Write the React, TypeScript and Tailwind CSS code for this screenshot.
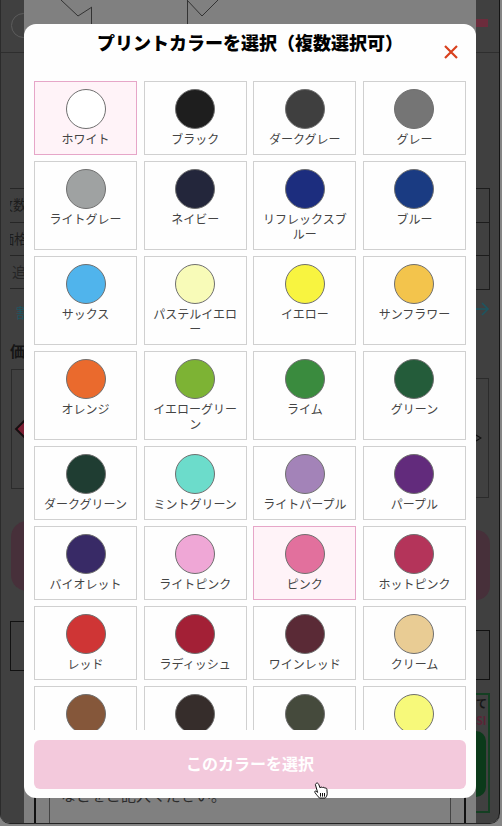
const FONT = "font-['Noto_Sans_CJK_JP','Noto_Sans',sans-serif]";

type Swatch = { name: string; color: string; selected?: boolean };

const swatches: Swatch[] = [
  { name: "ホワイト", color: "#ffffff", selected: true },
  { name: "ブラック", color: "#1e1e1e" },
  { name: "ダークグレー", color: "#3f3f3f" },
  { name: "グレー", color: "#757575" },
  { name: "ライトグレー", color: "#9fa2a2" },
  { name: "ネイビー", color: "#23263b" },
  { name: "リフレックスブルー", color: "#1c2d7e" },
  { name: "ブルー", color: "#1a3b82" },
  { name: "サックス", color: "#50b4ec" },
  { name: "パステルイエロー", color: "#f8fbb8" },
  { name: "イエロー", color: "#f8f440" },
  { name: "サンフラワー", color: "#f3c44c" },
  { name: "オレンジ", color: "#ea6a2d" },
  { name: "イエローグリーン", color: "#7db334" },
  { name: "ライム", color: "#3a8b3e" },
  { name: "グリーン", color: "#245c3a" },
  { name: "ダークグリーン", color: "#1f3d32" },
  { name: "ミントグリーン", color: "#6cdccb" },
  { name: "ライトパープル", color: "#a383b8" },
  { name: "パープル", color: "#622b7c" },
  { name: "バイオレット", color: "#382a66" },
  { name: "ライトピンク", color: "#efa7d6" },
  { name: "ピンク", color: "#e2709d", selected: true },
  { name: "ホットピンク", color: "#b4345a" },
  { name: "レッド", color: "#cf3535" },
  { name: "ラディッシュ", color: "#a32036" },
  { name: "ワインレッド", color: "#5a2a36" },
  { name: "クリーム", color: "#e9cc94" },
  { name: "ブラウン", color: "#85573a" },
  { name: "チョコレート", color: "#362d2b" },
  { name: "オリーブ", color: "#454a3c" },
  { name: "レモン", color: "#f7f97a" },
];

function ColorCell({ swatch }: { swatch: Swatch }) {
  return (
    <button
      className={
        "flex flex-col items-center border px-2 pt-[7px] pb-[8px] " +
        (swatch.selected ? "border-[#e6a6c8] bg-[#fff3f8]" : "border-[#d0d0d0] bg-[#fefefe]")
      }
    >
      <span
        className="block size-10 shrink-0 rounded-full border border-[#6f6f6f]"
        style={{ backgroundColor: swatch.color }}
      />
      <span className="mt-[2px] w-full text-center text-[12px] leading-[15px] text-[#444]">{swatch.name}</span>
    </button>
  );
}

function HandCursor() {
  return (
    <svg viewBox="0 0 16 17" className="absolute left-[312px] top-[782px] h-[17px] w-4">
      <path
        d="M4.5 1.2c1-.5 1.8.2 2.2 1.2l1.5 3.6c.1-1.2 2-1.3 2.4 0 .3-1 2-.9 2.3.3.6-.6 1.9-.3 2 1l.3 4.2c0 2-1 3.6-2 4.6H7.5c-1.2-1.5-2.8-3-4.5-5.5C2.3 9.5 3 8.6 4.2 9.3l1.4 1.1L3.5 3c-.3-.8.3-1.5 1-1.8z"
        fill="#fff"
        stroke="#111"
        strokeWidth="1"
      />
      <path d="M8.5 11v3.6M10.5 11v3.6M12.5 11v3.6" stroke="#111" strokeWidth="1" />
    </svg>
  );
}

function LeftStrip() {
  return (
    <div className="flex w-6 shrink-0 flex-col overflow-hidden border-l border-[#2b2b2b] bg-[#404040] text-[#1c1c1c]">
      <div className="h-[53px] shrink-0 border-b border-[#2e2e2e] pl-[10px] pt-[13px]">
        <div className="size-[25px] w-[26px] rounded-full border border-[#5c5c5c]" />
      </div>
      <div className="h-[135px] shrink-0" />
      <div className="ml-[9px] flex shrink-0 flex-col overflow-hidden text-[14px]">
        <div className="h-[34px] border-t border-[#262626] pt-[5px] leading-[20px] whitespace-nowrap">
          <span className="-ml-[11px] block">枚数</span>
        </div>
        <div className="h-[33px] border-t border-[#262626] pt-[5px] leading-[20px] whitespace-nowrap">
          <span className="-ml-[10px] block">価格</span>
        </div>
        <div className="h-[34px] border-y border-[#262626] pt-[5px] pl-[2px] leading-[20px] text-[#262626]">追</div>
      </div>
      <div className="mt-[14px] h-[18px] shrink-0 pl-[15px] text-[14px] leading-[18px] text-[#1d5560]">割</div>
      <div className="mt-[20px] h-[20px] shrink-0 pl-[9px] text-[15px] font-bold leading-[20px] text-[#151515]">価</div>
      <div className="mt-[8px] ml-[10px] flex h-[120px] w-[40px] shrink-0 items-center border border-[#2b2b2b] pl-[6px]">
        <div className="size-4 rotate-45 border-2 border-[#111] bg-[#7c1f33]" />
      </div>
      <div className="mt-[32px] ml-[10px] h-[70px] w-[40px] shrink-0 rounded-2xl bg-[#47303a]" />
      <div className="mt-[30px] ml-[9px] h-[50px] w-[40px] shrink-0 border border-[#111]" />
    </div>
  );
}

function RightStrip() {
  return (
    <div className="flex w-[24px] shrink-0 flex-col overflow-hidden rounded-br-[10px] border-r border-[#141414] bg-[#404040] text-[#1c1c1c]">
      <div className="mt-[19px] h-[8px] w-[12px] shrink-0 bg-[#6c2c3c]" />
      <div className="mt-[25px] h-px w-full shrink-0 bg-[#2e2e2e]" />
      <div className="h-[135px] shrink-0" />
      <div className="flex h-[102px] w-[14px] shrink-0 flex-col border border-l-0 border-[#1c1c1c]">
        <div className="h-[34px] border-b border-[#1c1c1c]" />
        <div className="h-[33px] border-b border-[#1c1c1c]" />
      </div>
      <div className="mt-[11px] h-[16px] shrink-0 text-[#1d5560]">
        <svg viewBox="0 0 14 16" className="h-4 w-[14px]" fill="none" stroke="currentColor" strokeWidth="1.6">
          <path d="M0 8h12M6 2l6 6-6 6" />
        </svg>
      </div>
      <div className="mt-[61px] flex h-[120px] w-[13px] shrink-0 items-center border border-l-0 border-[#2b2b2b]">
        <svg viewBox="0 0 6 8" className="h-2 w-[6px]" fill="none" stroke="#111" strokeWidth="1.2">
          <path d="M0 1l5 3-5 3" />
        </svg>
      </div>
      <div className="mt-[32px] h-[70px] w-[14px] shrink-0 rounded-r-2xl bg-[#47303a]" />
      <div className="mt-[30px] h-[50px] w-[14px] shrink-0 border border-l-0 border-[#111]" />
      <div className="mt-[13px] h-[120px] w-[14px] shrink-0 border-2 border-l-0 border-[#143f22] text-[11px] leading-[14px]">
        <div className="pt-[1px] font-bold text-[#161616]">て</div>
        <div className="pt-[3px] font-bold text-[#5a2436]">SI</div>
        <div className="mt-[4px] h-[66px] w-[10px] rounded-r-full bg-[#0b3a1a]" />
      </div>
    </div>
  );
}

export default function App() {
  return (
    <div className={"relative h-[826px] w-[502px] overflow-hidden bg-[#858585] " + FONT}>
      <div className="flex h-[824px] w-[500px] overflow-hidden rounded-b-[10px] border-b border-[#222]">
        <LeftStrip />
        <div className="flex min-w-0 flex-1 flex-col justify-between bg-[#808080]">
          <svg viewBox="0 0 452 24" className="h-6 w-full" fill="none" stroke="#333" strokeWidth="1">
            <path d="M37 0l17 16 14-9M67.500 7v17M163.500 24V0M163 0l15 16 16-16" />
          </svg>
          <div className="mx-[10px] h-[37px] border-x-2 border-[#111]">
            <div className="mx-[13px] h-full border-x border-[#444] pl-[11px] text-[15px] leading-[18px] text-[#2c2c2c]">
              などをご記入ください。
            </div>
          </div>
        </div>
        <RightStrip />
      </div>

      <div className="absolute left-6 top-6 flex h-[774px] w-[452px] flex-col overflow-hidden rounded-xl bg-[#fefefe] px-[10px]">
        <div className="relative h-[57px] shrink-0 pt-[5px] text-center text-[18px] font-black leading-[26px] text-black">
          プリントカラーを選択（複数選択可）
          <button aria-label="閉じる" className="absolute right-[8px] top-[21px] text-[#d9411e]">
            <svg viewBox="0 0 14 14" className="size-[14px]" fill="none" stroke="currentColor" strokeWidth="2.2">
              <path d="M1 1l12 12M13 1L1 13" />
            </svg>
          </button>
        </div>
        <div className="min-h-0 flex-1 overflow-hidden">
          <div className="grid grid-cols-4 gap-x-[6.67px] gap-y-[6px]">
            {swatches.map((s) => (
              <ColorCell key={s.name} swatch={s} />
            ))}
          </div>
        </div>
        <div className="shrink-0 pt-[10px] pb-[9px]">
          <button className="flex h-[49px] w-full items-center justify-center rounded-md bg-[#f3c9dc] pb-[3px] text-[16px] font-bold text-white">
            このカラーを選択
          </button>
        </div>
      </div>

      <HandCursor />
    </div>
  );
}
